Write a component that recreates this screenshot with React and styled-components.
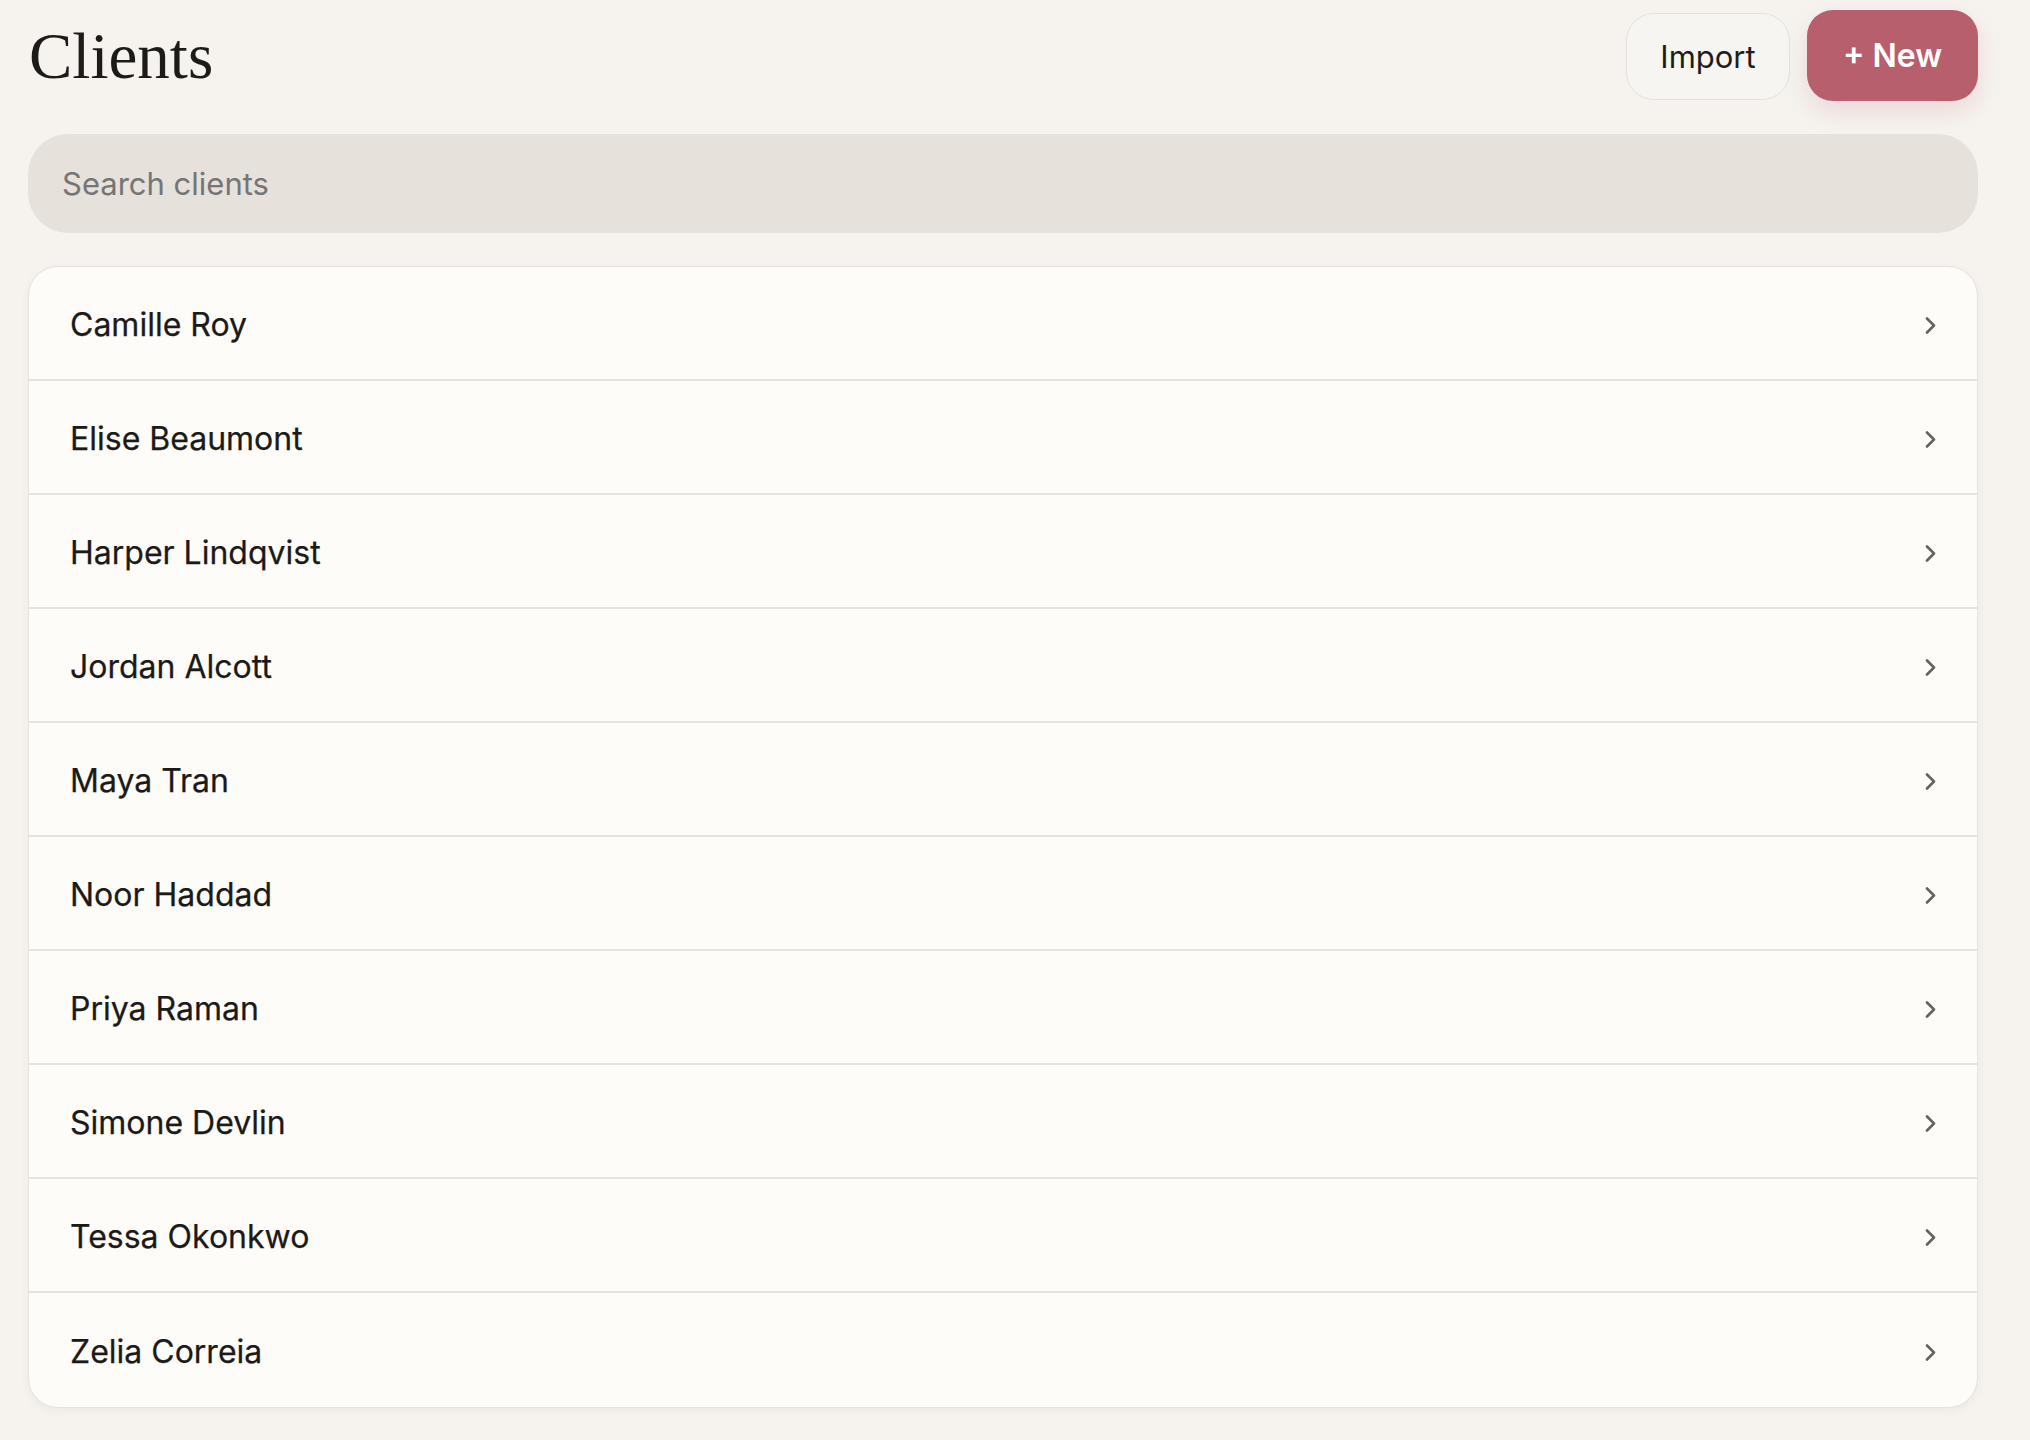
import styled, { createGlobalStyle } from 'styled-components';

const clients = [
  'Camille Roy',
  'Elise Beaumont',
  'Harper Lindqvist',
  'Jordan Alcott',
  'Maya Tran',
  'Noor Haddad',
  'Priya Raman',
  'Simone Devlin',
  'Tessa Okonkwo',
  'Zelia Correia',
];

const GlobalStyle = createGlobalStyle`
  html, body {
    margin: 0;
    padding: 0;
    background: #f6f3ee;
  }
  body {
    font-family: Inter, "Liberation Sans", sans-serif;
    color: #1f1d1a;
  }
  * {
    box-sizing: border-box;
  }
`;

const Chevron = () => (
  <svg width="12" height="17" viewBox="0 0 12 17" fill="none">
    <polyline
      points="2,1.5 9,8.5 2,15.5"
      stroke="#67625d"
      strokeWidth="2.6"
      strokeLinecap="round"
      strokeLinejoin="round"
    />
  </svg>
);

const App = () => {
  return (
    <>
      <GlobalStyle />
      <Page>
        <Header>
          <Title>Clients</Title>
          <Actions>
            <GhostBtn>Import</GhostBtn>
            <PrimaryBtn>+ New</PrimaryBtn>
          </Actions>
        </Header>

        <Search placeholder="Search clients" />

        <List>
          {clients.map((name) => (
            <Row key={name}>
              <Name>{name}</Name>
              <Arrow>
                <Chevron />
              </Arrow>
            </Row>
          ))}
        </List>
      </Page>
    </>
  );
};

export default App;

const Page = styled.div`
  width: 1978px;
  padding: 10px 0 34px 28px;
  display: flex;
  flex-direction: column;
`;

const Header = styled.div`
  display: flex;
  justify-content: space-between;
  align-items: center;
  height: 91px;
  margin-bottom: 33px;
`;

const Title = styled.h1`
  margin: 0;
  font-family: "Liberation Serif", "DejaVu Serif", serif;
  font-weight: 400;
  font-size: 65px;
  letter-spacing: 0;
  color: #1d1b18;
  line-height: 1;
  padding-left: 1px;
  margin-top: 2px;
`;

const Actions = styled.div`
  display: flex;
  align-items: center;
  gap: 17px;
`;

const GhostBtn = styled.button`
  height: 87px;
  width: 164px;
  border: 1.5px solid #e4e0db;
  border-radius: 28px;
  background: #f7f5f1;
  font-family: Inter, "Liberation Sans", sans-serif;
  font-size: 31px;
  color: #1f1d1a;
  cursor: pointer;
  margin-top: 1px;
`;

const PrimaryBtn = styled.button`
  height: 91px;
  width: 171px;
  border: none;
  border-radius: 26px;
  background: #b75f6d;
  color: #fff;
  font-family: Inter, "Liberation Sans", sans-serif;
  font-size: 32px;
  font-weight: 600;
  box-shadow: 0 10px 24px rgba(183, 95, 109, 0.18);
  cursor: pointer;
`;

const Search = styled.input`
  height: 99px;
  width: 100%;
  border: none;
  outline: none;
  border-radius: 40px;
  background: #e7e1dc;
  padding: 0 34px;
  font-family: Inter, "Liberation Sans", sans-serif;
  font-size: 31px;
  color: #1f1d1a;
  margin-bottom: 33px;

  ::placeholder {
    color: #79726c;
  }
`;

const List = styled.div`
  background: #fdfcf9;
  border: 1.5px solid #e6e2dd;
  border-radius: 30px;
  overflow: hidden;
  box-shadow: 0 3px 10px rgba(60, 45, 30, 0.05);
`;

const Row = styled.div`
  height: 114px;
  display: flex;
  align-items: center;
  justify-content: space-between;
  padding: 2px 40px 0 41px;
  border-bottom: 2px solid #e6e2dd;
  cursor: pointer;

  &:last-child {
    border-bottom: none;
  }
`;

const Name = styled.span`
  font-size: 32px;
  color: #1c1a17;
  -webkit-text-stroke: 0.25px #1c1a17;
`;

const Arrow = styled.span`
  display: flex;
  margin-top: 2px;
`;
